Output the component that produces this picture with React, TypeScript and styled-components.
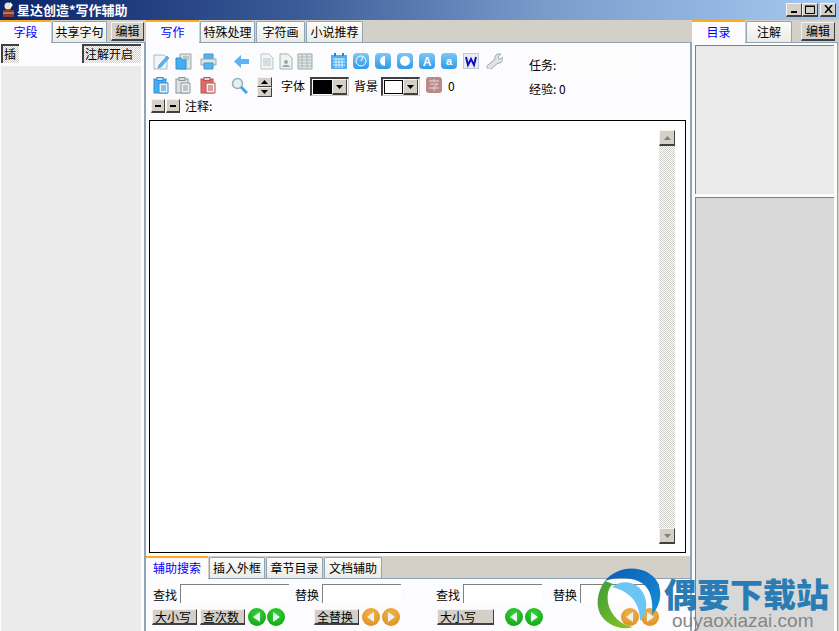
import React from "react";
import styled, { createGlobalStyle } from "styled-components";

const Global = createGlobalStyle`
  html, body { margin: 0; padding: 0; overflow: hidden; }
  body { font-family: "Noto Sans CJK SC", "Liberation Sans", sans-serif; font-size: 12px; color: #000; }
`;

const raised = `
  background: #d4d0c8;
  border-top: 1px solid #f4f3f0;
  border-left: 1px solid #f4f3f0;
  border-right: 1px solid #404040;
  border-bottom: 2px solid #404040;
  box-sizing: border-box;
`;
const dither = `repeating-conic-gradient(#cfcdc8 0 25%, #ffffff 0 50%) 0 0 / 2px 2px`;

const Window = styled.div`
  position: relative;
  width: 839px;
  height: 631px;
  overflow: hidden;
  display: flex;
  flex-direction: column;
  background: #d4d0c8;
`;
const TitleBar = styled.div`
  height: 20px;
  flex: none;
  display: flex;
  align-items: center;
  padding: 0 3px 1px 2px;
  box-sizing: border-box;
  gap: 2px;
  background: linear-gradient(90deg, #0a246a 0%, #3a5a96 35%, #7a9ccc 65%, #a6caf0 100%);
`;
const TitleText = styled.div`
  color: #fff;
  font-weight: 700;
  font-size: 13px;
  line-height: 18px;
  flex: 1;
`;
const WinButton = styled.div<{ $ml: number }>`
  ${raised}
  width: 16px;
  height: 14px;
  margin-left: ${(p) => p.$ml}px;
  display: flex;
  align-items: center;
  justify-content: center;
`;
const Columns = styled.div`
  flex: 1;
  display: flex;
  min-height: 0;
`;
const LeftCol = styled.div`
  width: 144px;
  flex: none;
  display: flex;
  flex-direction: column;
`;
const CenterCol = styled.div`
  width: 546px;
  flex: none;
  display: flex;
  flex-direction: column;
`;
const RightCol = styled.div`
  width: 149px;
  flex: none;
  display: flex;
  flex-direction: column;
`;
const TabRow = styled.div<{ $pl?: number }>`
  height: 23px;
  flex: none;
  display: flex;
  align-items: flex-end;
  padding-left: ${(p) => p.$pl ?? 0}px;
  border-bottom: 1px solid #8fa5b5;
  box-sizing: border-box;
`;
const Tab = styled.div<{ $active?: boolean; $w: number }>`
  width: ${(p) => p.$w}px;
  flex: none;
  box-sizing: border-box;
  text-align: center;
  height: ${(p) => (p.$active ? 23 : 21)}px;
  line-height: 19px;
  color: ${(p) => (p.$active ? "#0000ff" : "#000")};
  background: ${(p) => (p.$active ? "#fcfcff" : "linear-gradient(#fcfcfa, #ecebe4)")};
  border-top: ${(p) => (p.$active ? "2px solid #ffa91e" : "1px solid #8fa5b5")};
  border-left: ${(p) => (p.$active ? "none" : "1px solid #8fa5b5")};
  border-right: ${(p) => (p.$active ? "none" : "1px solid #8fa5b5")};
  margin-bottom: ${(p) => (p.$active ? "-1px" : "0")};
  margin-right: 1px;
  border-radius: ${(p) => (p.$active ? "0" : "2px 2px 0 0")};
  white-space: nowrap;
`;
const EditButton = styled.div<{ $ml: number }>`
  ${raised}
  margin-left: ${(p) => p.$ml}px;
  margin-bottom: 1px;
  width: 34px;
  height: 19px;
  line-height: 16px;
  text-align: center;
`;
const LeftBody = styled.div`
  flex: 1;
  background: #fcfcff;
  display: flex;
  flex-direction: column;
  padding: 1px 3px 0 1px;
`;
const LeftButtons = styled.div`
  display: flex;
  justify-content: space-between;
  height: 19px;
`;
const ToggleButton = styled.div<{ $w: number }>`
  width: ${(p) => p.$w}px;
  height: 19px;
  box-sizing: border-box;
  background: ${dither};
  border-top: 2px solid #404040;
  border-left: 2px solid #404040;
  line-height: 16px;
  padding-left: 1px;
  white-space: nowrap;
`;
const GreyPane = styled.div`
  flex: 1;
  margin-top: 3px;
  background: #ebebeb;
`;
const CenterBody = styled.div`
  flex: 1;
  background: #fcfcff;
  display: flex;
  flex-direction: column;
  min-height: 0;
  border-left: 2px solid #8fa5b5;
`;
const Toolbar = styled.div`
  height: 77px;
  flex: none;
  display: flex;
`;
const ToolRows = styled.div`
  width: 383px;
  flex: none;
  padding: 10px 0 0 7px;
  box-sizing: border-box;
`;
const ToolRow = styled.div<{ $h: number }>`
  height: ${(p) => p.$h}px;
  display: flex;
  align-items: flex-start;
`;
const Slot = styled.div<{ $ml?: number }>`
  margin-left: ${(p) => p.$ml ?? 0}px;
  flex: none;
  display: flex;
  align-items: center;
`;
const Spinner = styled.div`
  width: 15px;
  display: flex;
  flex-direction: column;
`;
const SpinBtn = styled.div`
  ${raised}
  border-bottom-width: 1px;
  height: 10px;
  display: flex;
  align-items: center;
  justify-content: center;
`;
const ToolLabel = styled.span<{ $ml: number; $mt?: number }>`
  margin-left: ${(p) => p.$ml}px;
  margin-top: ${(p) => p.$mt ?? 0}px;
  line-height: 18px;
  white-space: nowrap;
`;
const Combo = styled.div<{ $color: string; $ml: number }>`
  margin-left: ${(p) => p.$ml}px;
  width: 39px;
  height: 19px;
  box-sizing: border-box;
  border-top: 2px solid #404040;
  border-left: 2px solid #404040;
  border-right: 1px solid #d4d0c8;
  border-bottom: 1px solid #d4d0c8;
  background: #fff;
  display: flex;
  padding: 1px;
  &::before {
    content: "";
    flex: 1;
    background: ${(p) => p.$color};
    border: 1px solid #000;
  }
`;
const ComboArrow = styled.div`
  ${raised}
  width: 15px;
  margin-top: -1px;
  margin-bottom: -1px;
  display: flex;
  align-items: center;
  justify-content: center;
`;
const MiniBtn = styled.div`
  ${raised}
  width: 14px;
  height: 14px;
  margin-right: 1px;
  display: flex;
  align-items: center;
  justify-content: center;
  &:first-child {
    margin-left: -2px;
  }
`;
const MiniDash = styled.span`
  width: 6px;
  height: 2px;
  background: #000;
`;
const TaskCol = styled.div`
  padding-top: 13px;
`;
const TaskRow = styled.div<{ $h: number }>`
  height: ${(p) => p.$h}px;
  display: flex;
  line-height: 18px;
  white-space: nowrap;
`;
const TaskField = styled.div`
  width: 80px;
  height: 17px;
  background: #fdfdfd;
`;
const Editor = styled.div`
  flex: 1;
  min-height: 0;
  margin: 0 4px 0 3px;
  background: #fff;
  border: 1px solid #000;
  display: flex;
  justify-content: flex-end;
  padding: 9px 10px 8px 0;
`;
const ScrollBar = styled.div`
  width: 16px;
  display: flex;
  flex-direction: column;
  background: ${dither};
`;
const ScrollBtn = styled.div`
  ${raised}
  height: 16px;
  display: flex;
  align-items: center;
  justify-content: center;
`;
const ScrollSpace = styled.div`
  flex: 1;
`;
const BottomTabs = styled(TabRow)`
  margin-top: 3px;
  background: #d4d0c8;
`;
const BottomBody = styled.div`
  height: 52px;
  flex: none;
  background: #fcfcff;
  display: flex;
  padding-left: 7px;
  box-sizing: border-box;
`;
const SearchCol = styled.div<{ $w: number }>`
  width: ${(p) => p.$w}px;
  flex: none;
  padding-top: 5px;
  box-sizing: border-box;
`;
const SearchRow = styled.div`
  display: flex;
  height: 25px;
`;
const SearchLabel = styled.span<{ $ml?: number }>`
  margin-left: ${(p) => p.$ml ?? 0}px;
  width: 27px;
  line-height: 21px;
  white-space: nowrap;
`;
const SearchInput = styled.div<{ $w: number }>`
  width: ${(p) => p.$w}px;
  height: 19px;
  box-sizing: border-box;
  background: #fff;
  border-top: 1px solid #808080;
  border-left: 1px solid #808080;
`;
const ActionRow = styled.div`
  display: flex;
  align-items: flex-start;
`;
const ActionButton = styled.div<{ $w: number; $ml: number }>`
  ${raised}
  width: ${(p) => p.$w}px;
  margin-left: ${(p) => p.$ml}px;
  height: 16px;
  line-height: 13px;
  padding-left: 2px;
  white-space: nowrap;
`;
const RoundButton = styled.div<{ $color: string; $edge: string; $ml: number }>`
  width: 18px;
  height: 18px;
  margin-left: ${(p) => p.$ml}px;
  margin-top: -1px;
  flex: none;
  border-radius: 50%;
  background: radial-gradient(circle at 50% 35%, ${(p) => p.$color}, ${(p) => p.$edge});
  display: flex;
  align-items: center;
  justify-content: center;
`;
const RightBody = styled.div`
  flex: 1;
  background: #fcfcff;
  display: flex;
  flex-direction: column;
  padding: 2px 3px 0 3px;
  border-left: 2px solid #8fa5b5;
  border-right: 1px solid #8fa5b5;
  margin-right: 1px;
  gap: 3px;
  min-height: 0;
`;
const RightPane = styled.div<{ $bg: string; $h?: number }>`
  background: ${(p) => p.$bg};
  border-top: 1px solid #808080;
  border-left: 1px solid #808080;
  ${(p) => (p.$h ? `height: ${p.$h}px;` : "flex: 1;")}
`;
const Watermark = styled.div`
  position: absolute;
  left: 596px;
  top: 567px;
  display: flex;
`;
const WatermarkText = styled.div`
  margin-left: 2px;
  padding-top: 8px;
  display: flex;
  flex-direction: column;
`;
const SiteName = styled.div`
  font-weight: 900;
  font-size: 33px;
  line-height: 36px;
  color: #2a7db4;
  white-space: nowrap;
`;
const SiteUrl = styled.div`
  font-family: "Liberation Sans", sans-serif;
  margin-left: 8px;
  font-size: 19px;
  line-height: 20px;
  color: #868686;
  white-space: nowrap;
`;

const Doc = ({ c = "#b9c6c6" }: { c?: string }) => (
  <svg width="16" height="17" viewBox="0 0 16 17">
    <path d="M2 1h8l4 4v11H2z" fill="#f4f6f4" stroke={c} />
    <path d="M4 6h8M4 8h8M4 10h8M4 12h8" stroke={c} />
  </svg>
);
const Note = () => (
  <svg width="17" height="17" viewBox="0 0 17 17">
    <path d="M1 2h10l3 3v11H1z" fill="#f0f5f5" stroke="#a8bcc0" />
    <path d="M6 12l8-9 2 2-8 9-3 1z" fill="#5cb2ee" stroke="#3b8fd0" strokeWidth=".6" />
  </svg>
);
const Folder = () => (
  <svg width="17" height="17" viewBox="0 0 17 17">
    <path d="M5 1h11v15H5z" fill="#dde3e3" stroke="#9aa8a8" />
    <path d="M8 4h6M8 6h6" stroke="#9aa8a8" />
    <path d="M1 5h5l1 2h4v9H1z" fill="#45aef0" stroke="#2c8ed6" />
  </svg>
);
const Printer = () => (
  <svg width="17" height="17" viewBox="0 0 17 17">
    <path d="M4 1h9v5H4z" fill="#55b4ef" stroke="#3a97d8" />
    <path d="M1 6h15v6H1z" fill="#dfe4e4" stroke="#9aa8a8" />
    <path d="M4 10h9v6H4z" fill="#55b4ef" stroke="#3a97d8" />
  </svg>
);
const BackArrow = () => (
  <svg width="17" height="17" viewBox="0 0 17 17">
    <path d="M8 2v4h8v5H8v4L1 8.5z" fill="#59b6f2" />
  </svg>
);
const DocPerson = () => (
  <svg width="14" height="17" viewBox="0 0 14 17">
    <path d="M1 1h8l4 4v11H1z" fill="#f1f3f1" stroke="#a3b2b0" />
    <circle cx="7" cy="9" r="2" fill="#9aa8a8" />
    <path d="M3 14c1-3 7-3 8 0z" fill="#9aa8a8" />
  </svg>
);
const Sheet = () => (
  <svg width="16" height="17" viewBox="0 0 16 17">
    <path d="M1 1h14v15H1z" fill="#e5e9e5" stroke="#9aa8a8" />
    <path d="M1 4h14M1 7h14M1 10h14M1 13h14M5 1v15M10 1v15" stroke="#a9b6b4" />
  </svg>
);
const Calendar = () => (
  <svg width="16" height="16" viewBox="0 0 16 16">
    <rect x="0" y="2" width="16" height="14" fill="#4eb0f2" />
    <path d="M4 0v3M12 0v3" stroke="#2583d0" strokeWidth="2" />
    <path d="M2 6h12M2 9h12M2 12h12M5 5v10M8 5v10M11 5v10" stroke="#d9f0ff" />
  </svg>
);
const BlueTile = ({ children }: { children: React.ReactNode }) => (
  <svg width="16" height="16" viewBox="0 0 16 16">
    <defs>
      <linearGradient id="tile" x1="0" y1="0" x2="0" y2="1">
        <stop offset="0" stopColor="#7cc8f8" />
        <stop offset="1" stopColor="#2e9ae8" />
      </linearGradient>
    </defs>
    <rect width="16" height="16" rx="4" fill="url(#tile)" />
    {children}
  </svg>
);
const WTile = () => (
  <svg width="16" height="16" viewBox="0 0 16 16">
    <rect x=".5" y=".5" width="15" height="15" fill="#e8ecf4" stroke="#c4c8cc" />
    <path d="M3 4l2 8 3-6 3 6 2-8" fill="none" stroke="#1010c0" strokeWidth="2" />
  </svg>
);
const Wrench = () => (
  <svg width="17" height="16" viewBox="0 0 17 16">
    <path d="M1 13l8-7c-1-3 2-6 6-5l-3 3 1 2 2 0 2-2c1 3-2 7-5 6l-7 6c-2 1-5-1-4-3z" fill="#dfe4e4" stroke="#9aa8a8" />
  </svg>
);
const Clip = ({ c, e }: { c: string; e: string }) => (
  <svg width="16" height="17" viewBox="0 0 16 17">
    <rect x="1" y="2" width="12" height="14" fill={c} stroke={e} />
    <rect x="4" y="0.5" width="6" height="3" fill="#d8dcdc" stroke={e} />
    <path d="M6 6h9v10H6z" fill="#f0f2f0" stroke={e} />
    <path d="M8 9h5M8 11h5M8 13h5" stroke={e} />
  </svg>
);
const Magnifier = () => (
  <svg width="17" height="17" viewBox="0 0 17 17">
    <circle cx="6.5" cy="6.5" r="5" fill="#e4f0f4" stroke="#9ab0b4" strokeWidth="1.5" />
    <path d="M10 10l6 6" stroke="#45a5ea" strokeWidth="3" />
  </svg>
);
const Hanzi = () => (
  <svg width="16" height="16" viewBox="0 0 16 16">
    <rect width="16" height="16" rx="3" fill="#b98a88" />
    <path d="M3 4h10M8 2v3M4 7h8l-3 2M3 11h10M8 9v5" stroke="#e8d8d6" fill="none" />
  </svg>
);
const DownTri = ({ c = "#000" }: { c?: string }) => (
  <svg width="7" height="4" viewBox="0 0 7 4"><path d="M0 0h7L3.5 4z" fill={c} /></svg>
);
const UpTri = ({ c = "#000" }: { c?: string }) => (
  <svg width="7" height="4" viewBox="0 0 7 4"><path d="M0 4h7L3.5 0z" fill={c} /></svg>
);
const LeftTri = () => (
  <svg width="8" height="10" viewBox="0 0 8 10"><path d="M7 0v10L0 5z" fill="#e8f4fa" /></svg>
);
const RightTri = () => (
  <svg width="8" height="10" viewBox="0 0 8 10"><path d="M1 0v10L8 5z" fill="#e8f4fa" /></svg>
);
const AppIcon = () => (
  <svg width="13" height="15" viewBox="0 0 13 15">
    <rect x="1" y="8" width="11" height="7" fill="#8a3a28" />
    <circle cx="6" cy="4" r="3.5" fill="#f0e0d0" />
    <path d="M8 0l3 3-3 3z" fill="#fff" />
    <path d="M1 11h11" stroke="#d8b0a0" />
  </svg>
);
const Swoosh = () => (
  <svg width="66" height="64" viewBox="0 0 66 64">
    <defs>
      <linearGradient id="blue" x1="0" y1="0" x2="1" y2="1">
        <stop offset="0" stopColor="#0c5cae" />
        <stop offset="1" stopColor="#1590dc" />
      </linearGradient>
      <linearGradient id="green" x1="0" y1="0" x2="1" y2="1">
        <stop offset="0" stopColor="#3d9c3a" />
        <stop offset="1" stopColor="#8cc81e" />
      </linearGradient>
    </defs>
    <path d="M9 14C22-3 52-3 62 16c5 12 1 24-6 32 1-12 0-27-12-33C32 9 18 11 9 14z" fill="url(#blue)" />
    <path d="M16 20C28 10 47 16 50 34c1 9-1 15-6 20 0-12-4-28-28-34z" fill="#6cc6f4" />
    <path d="M9 14C0 26-2 44 10 54c7 6 18 9 27 6-12-2-22-11-25-24-1-8 0-15 5-19z" fill="url(#green)" />
  </svg>
);

const Green = ({ ml, dir }: { ml: number; dir: "l" | "r" }) => (
  <RoundButton $ml={ml} $color="#35d435" $edge="#0c9c10">{dir === "l" ? <LeftTri /> : <RightTri />}</RoundButton>
);
const Orange = ({ ml, dir }: { ml: number; dir: "l" | "r" }) => (
  <RoundButton $ml={ml} $color="#f6b44a" $edge="#d88a18">{dir === "l" ? <LeftTri /> : <RightTri />}</RoundButton>
);

export default function App() {
  return (
    <Window>
      <Global />
      <TitleBar>
        <AppIcon />
        <TitleText>星达创造*写作辅助</TitleText>
        <WinButton $ml={0}><svg width="8" height="8"><path d="M1 7h6" stroke="#000" strokeWidth="2" /></svg></WinButton>
        <WinButton $ml={-2}><svg width="10" height="9"><path d="M.5 1.5h9v7h-9z M0 1h10" fill="none" stroke="#000" /></svg></WinButton>
        <WinButton $ml={0}><svg width="9" height="8"><path d="M1 0l7 8M8 0L1 8" stroke="#000" strokeWidth="1.5" /></svg></WinButton>
      </TitleBar>
      <Columns>
        <LeftCol>
          <TabRow>
            <Tab $active $w={51}>字段</Tab>
            <Tab $w={55}>共享字句</Tab>
            <EditButton $ml={3}>编辑</EditButton>
          </TabRow>
          <LeftBody>
            <LeftButtons>
              <ToggleButton $w={18}>插</ToggleButton>
              <ToggleButton $w={59}>注解开启</ToggleButton>
            </LeftButtons>
            <GreyPane />
          </LeftBody>
        </LeftCol>
        <CenterCol>
          <TabRow $pl={2}>
            <Tab $active $w={53}>写作</Tab>
            <Tab $w={55}>特殊处理</Tab>
            <Tab $w={49}>字符画</Tab>
            <Tab $w={57}>小说推荐</Tab>
          </TabRow>
          <CenterBody>
            <Toolbar>
              <ToolRows>
                <ToolRow $h={24}>
                  <Slot><Note /></Slot>
                  <Slot $ml={5}><Folder /></Slot>
                  <Slot $ml={8}><Printer /></Slot>
                  <Slot $ml={16}><BackArrow /></Slot>
                  <Slot $ml={9}><Doc /></Slot>
                  <Slot $ml={4}><DocPerson /></Slot>
                  <Slot $ml={4}><Sheet /></Slot>
                  <Slot $ml={18}><Calendar /></Slot>
                  <Slot $ml={6}><BlueTile><circle cx="8" cy="8" r="5" fill="none" stroke="#fff" /><path d="M8 8l2-4" stroke="#fff" /></BlueTile></Slot>
                  <Slot $ml={6}><BlueTile><path d="M10 3a5 5 0 0 0 0 10z" fill="#fff" /></BlueTile></Slot>
                  <Slot $ml={6}><BlueTile><circle cx="8" cy="8" r="5" fill="#fff" /></BlueTile></Slot>
                  <Slot $ml={6}><BlueTile><text x="8" y="12.5" textAnchor="middle" fontSize="12" fontWeight="700" fill="#fff" fontFamily="Liberation Sans">A</text></BlueTile></Slot>
                  <Slot $ml={6}><BlueTile><text x="8" y="12" textAnchor="middle" fontSize="11" fontWeight="700" fill="#fff" fontFamily="Liberation Sans">a</text></BlueTile></Slot>
                  <Slot $ml={6}><WTile /></Slot>
                  <Slot $ml={7}><Wrench /></Slot>
                </ToolRow>
                <ToolRow $h={22}>
                  <Slot><Clip c="#45aef0" e="#2c8ed6" /></Slot>
                  <Slot $ml={6}><Clip c="#dfe3e3" e="#8a9696" /></Slot>
                  <Slot $ml={9}><Clip c="#e06a6a" e="#c05050" /></Slot>
                  <Slot $ml={15}><Magnifier /></Slot>
                  <Slot $ml={9}>
                    <Spinner>
                      <SpinBtn><UpTri /></SpinBtn>
                      <SpinBtn><DownTri /></SpinBtn>
                    </Spinner>
                  </Slot>
                  <ToolLabel $ml={9}>字体</ToolLabel>
                  <Combo $color="#000" $ml={5}><ComboArrow><DownTri /></ComboArrow></Combo>
                  <ToolLabel $ml={5}>背景</ToolLabel>
                  <Combo $color="#fff" $ml={3}><ComboArrow><DownTri /></ComboArrow></Combo>
                  <Slot $ml={6}><Hanzi /></Slot>
                  <ToolLabel $ml={6}>0</ToolLabel>
                </ToolRow>
                <ToolRow $h={16}>
                  <MiniBtn><MiniDash /></MiniBtn>
                  <MiniBtn><MiniDash /></MiniBtn>
                  <ToolLabel $ml={4} $mt={-2}>注释:</ToolLabel>
                </ToolRow>
              </ToolRows>
              <TaskCol>
                <TaskRow $h={24}>任务:<TaskField /></TaskRow>
                <TaskRow $h={18}>经验: 0</TaskRow>
              </TaskCol>
            </Toolbar>
            <Editor>
              <ScrollBar>
                <ScrollBtn><UpTri c="#808080" /></ScrollBtn>
                <ScrollSpace />
                <ScrollBtn><DownTri c="#808080" /></ScrollBtn>
              </ScrollBar>
            </Editor>
            <BottomTabs>
              <Tab $active $w={62}>辅助搜索</Tab>
              <Tab $w={56}>插入外框</Tab>
              <Tab $w={57}>章节目录</Tab>
              <Tab $w={58}>文档辅助</Tab>
            </BottomTabs>
            <BottomBody>
              <SearchCol $w={283}>
                <SearchRow>
                  <SearchLabel>查找</SearchLabel>
                  <SearchInput $w={109} />
                  <SearchLabel $ml={6}>替换</SearchLabel>
                  <SearchInput $w={79} />
                </SearchRow>
                <ActionRow>
                  <ActionButton $w={45} $ml={-1}>大小写</ActionButton>
                  <ActionButton $w={45} $ml={3}>查次数</ActionButton>
                  <Green ml={3} dir="l" />
                  <Green ml={1} dir="r" />
                  <ActionButton $w={45} $ml={29}>全替换</ActionButton>
                  <Orange ml={3} dir="l" />
                  <Orange ml={2} dir="r" />
                </ActionRow>
              </SearchCol>
              <SearchCol $w={240}>
                <SearchRow>
                  <SearchLabel>查找</SearchLabel>
                  <SearchInput $w={79} />
                  <SearchLabel $ml={11}>替换</SearchLabel>
                  <SearchInput $w={79} />
                </SearchRow>
                <ActionRow>
                  <ActionButton $w={57} $ml={1}>大小写</ActionButton>
                  <Green ml={11} dir="l" />
                  <Green ml={2} dir="r" />
                  <Orange ml={78} dir="l" />
                  <Orange ml={2} dir="r" />
                </ActionRow>
              </SearchCol>
            </BottomBody>
          </CenterBody>
        </CenterCol>
        <RightCol>
          <TabRow $pl={2}>
            <Tab $active $w={53}>目录</Tab>
            <Tab $w={46}>注解</Tab>
            <EditButton $ml={8}>编辑</EditButton>
          </TabRow>
          <RightBody>
            <RightPane $bg="#ebebeb" $h={148} />
            <RightPane $bg="#d8d8d8" />
          </RightBody>
        </RightCol>
      </Columns>
      <Watermark>
        <Swoosh />
        <WatermarkText>
          <SiteName>偶要下载站</SiteName>
          <SiteUrl>ouyaoxiazai.com</SiteUrl>
        </WatermarkText>
      </Watermark>
    </Window>
  );
}
